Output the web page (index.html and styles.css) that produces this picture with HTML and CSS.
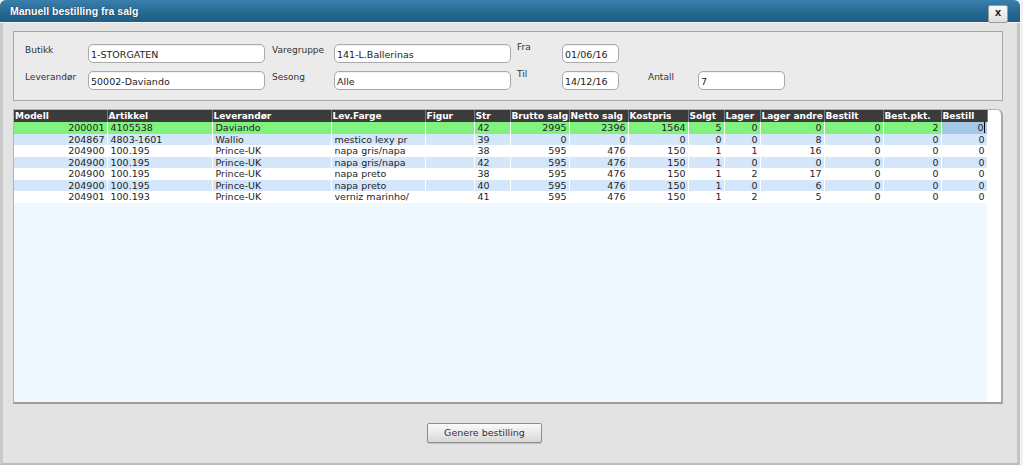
FILE: index.html
```html
<!DOCTYPE html>
<html>
<head>
<meta charset="utf-8">
<link rel="stylesheet" href="styles.css">
</head>
<body>
<div class="dialog">
  <div class="titlebar">
    <span class="title">Manuell bestilling fra salg</span>
    <span class="close">x</span>
  </div>
  <div class="content">
    <div class="panel">
      <label class="lbl">Butikk</label>
      <div class="inp">1-STORGATEN</div>
      <label class="lbl">Varegruppe</label>
      <div class="inp">141-L.Ballerinas</div>
      <label class="lbl up">Fra</label>
      <div class="inp">01/06/16</div>
      <span></span><span></span>

      <label class="lbl">Leverandør</label>
      <div class="inp">50002-Daviando</div>
      <label class="lbl">Sesong</label>
      <div class="inp">Alle</div>
      <label class="lbl up">Til</label>
      <div class="inp">14/12/16</div>
      <label class="lbl">Antall</label>
      <div class="inp">7</div>
    </div>

    <div class="gridbox">
      <div class="gridarea">
        <table class="grid">
          <colgroup>
            <col style="width:93px"><col style="width:105px"><col style="width:119px"><col style="width:94px"><col style="width:49px"><col style="width:36px"><col style="width:59px"><col style="width:59px"><col style="width:60px"><col style="width:36px"><col style="width:36px"><col style="width:64px"><col style="width:59px"><col style="width:58px"><col style="width:46px">
          </colgroup>
          <thead>
            <tr>
              <th>Modell</th><th>Artikkel</th><th>Leverandør</th><th>Lev.Farge</th><th>Figur</th><th>Str</th><th>Brutto salg</th><th>Netto salg</th><th>Kostpris</th><th>Solgt</th><th>Lager</th><th>Lager andre</th><th>Bestilt</th><th>Best.pkt.</th><th>Bestill</th>
            </tr>
          </thead>
          <tbody>
            <tr class="sel">
              <td class="r">200001</td><td>4105538</td><td>Daviando</td><td></td><td></td><td>42</td><td class="r">2995</td><td class="r">2396</td><td class="r">1564</td><td class="r">5</td><td class="r">0</td><td class="r">0</td><td class="r">0</td><td class="r">2</td><td class="r edit"><span class="caret">0</span></td>
            </tr>
            <tr class="alt">
              <td class="r">204867</td><td>4803-1601</td><td>Wallio</td><td>mestico lexy pr</td><td></td><td>39</td><td class="r">0</td><td class="r">0</td><td class="r">0</td><td class="r">0</td><td class="r">0</td><td class="r">8</td><td class="r">0</td><td class="r">0</td><td class="r">0</td>
            </tr>
            <tr>
              <td class="r">204900</td><td>100.195</td><td>Prince-UK</td><td>napa gris/napa</td><td></td><td>38</td><td class="r">595</td><td class="r">476</td><td class="r">150</td><td class="r">1</td><td class="r">1</td><td class="r">16</td><td class="r">0</td><td class="r">0</td><td class="r">0</td>
            </tr>
            <tr class="alt">
              <td class="r">204900</td><td>100.195</td><td>Prince-UK</td><td>napa gris/napa</td><td></td><td>42</td><td class="r">595</td><td class="r">476</td><td class="r">150</td><td class="r">1</td><td class="r">0</td><td class="r">0</td><td class="r">0</td><td class="r">0</td><td class="r">0</td>
            </tr>
            <tr>
              <td class="r">204900</td><td>100.195</td><td>Prince-UK</td><td>napa preto</td><td></td><td>38</td><td class="r">595</td><td class="r">476</td><td class="r">150</td><td class="r">1</td><td class="r">2</td><td class="r">17</td><td class="r">0</td><td class="r">0</td><td class="r">0</td>
            </tr>
            <tr class="alt">
              <td class="r">204900</td><td>100.195</td><td>Prince-UK</td><td>napa preto</td><td></td><td>40</td><td class="r">595</td><td class="r">476</td><td class="r">150</td><td class="r">1</td><td class="r">0</td><td class="r">6</td><td class="r">0</td><td class="r">0</td><td class="r">0</td>
            </tr>
            <tr>
              <td class="r">204901</td><td>100.193</td><td>Prince-UK</td><td>verniz marinho/</td><td></td><td>41</td><td class="r">595</td><td class="r">476</td><td class="r">150</td><td class="r">1</td><td class="r">2</td><td class="r">5</td><td class="r">0</td><td class="r">0</td><td class="r">0</td>
            </tr>
          </tbody>
        </table>
      </div>
    </div>

    <div class="footer">
      <button class="btn">Genere bestilling</button>
    </div>
  </div>
</div>
</body>
</html>
```

FILE: styles.css
```css
html, body {
  margin: 0;
  padding: 0;
  background: #f2f2f2;
}
body {
  width: 1023px;
  height: 465px;
  overflow: hidden;
  font-family: "DejaVu Sans", Verdana, sans-serif;
}
.dialog {
  width: 1020px;
  height: 465px;
  background: #e3e3e3;
  border-left: 3px solid #c9c9c9;
  border-right: 3px solid #c4c4c4;
  border-bottom: 2px solid #bdbdbd;
  border-radius: 6px 6px 0 0;
  display: flex;
  flex-direction: column;
  box-sizing: border-box;
}
.titlebar {
  height: 22px;
  margin: 0 -3px;
  background: linear-gradient(#3a80ad, #25678f 60%, #1f5e86);
  border-radius: 6px 6px 0 0;
  border-bottom: 1px solid #f4f4f4;
  display: flex;
  align-items: center;
  justify-content: space-between;
  padding: 0 10px 0 10px;
  flex-shrink: 0;
}
.title {
  color: #fff;
  font-family: "Liberation Sans", Arial, sans-serif;
  font-weight: bold;
  font-size: 10.5px;
  text-shadow: 0 0 1px #123;
  margin-top: -1px;
}
.close {
  width: 20px;
  height: 18px;
  box-sizing: border-box;
  margin-top: 5px;
  margin-right: 2px;
  background: linear-gradient(#fafafa, #dedede);
  border: 1px solid #9a9a9a;
  border-radius: 2px;
  display: flex;
  align-items: center;
  justify-content: center;
  font-family: "Liberation Sans", Arial, sans-serif;
  font-weight: bold;
  font-size: 11px;
  color: #111;
  line-height: 1;
  padding-bottom: 2px;
}
.content {
  padding: 8px 14px 0 10px;
  display: flex;
  flex-direction: column;
}
.panel {
  height: 70px;
  box-sizing: border-box;
  border: 1px solid #a6a6a6;
  background: #ebebeb;
  padding: 12px 0 0 11px;
  display: grid;
  grid-template-columns: 63px 177px 69px 177px 51px 57px 79px 87px;
  grid-template-rows: 19px 19px;
  row-gap: 8px;
}
.panel > :nth-child(8n+3) { margin-left: 7px; }
.panel > :nth-child(8n+5) { margin-left: 6px; }
.panel > :nth-child(8n+7) { margin-left: 29px; }
.lbl {
  font-size: 9px;
  color: #333;
  padding-top: 1px;
  white-space: nowrap;
}
.lbl.up {
  padding-top: 0;
  margin-top: -2px;
}
.inp {
  box-sizing: border-box;
  height: 19px;
  border: 1px solid #a9a9a9;
  border-radius: 5px;
  background: #fff;
  font-size: 9.5px;
  color: #222;
  padding: 4px 0 0 2px;
  white-space: nowrap;
  box-shadow: inset 0 1px 1px rgba(0,0,0,0.06);
}
.gridbox {
  margin-top: 8px;
  height: 295px;
  box-sizing: border-box;
  border: 1px solid #b3b3b3;
  border-bottom: 2px solid #9c9c9c;
  border-right: 2px solid #a9a9a9;
  border-radius: 0 6px 0 0;
  background: #fff;
  overflow: hidden;
}
.gridarea {
  width: 973px;
  height: 100%;
  background: #eff7ff;
}
.grid {
  border-collapse: collapse;
  table-layout: fixed;
  width: 973px;
  font-size: 9.5px;
  color: #1e1e1e;
}
.grid th {
  height: 12px;
  padding: 0 0 0 1px;
  background: #3b3b3b;
  color: #fff;
  font-weight: bold;
  font-size: 9px;
  text-align: left;
  border-right: 1px solid #7a7a7a;
  line-height: 12px;
  white-space: nowrap;
  overflow: hidden;
}
.grid td {
  height: 11.5px;
  padding: 0 2px 0 3px;
  line-height: 11px;
  border-right: 1px solid #fff;
  white-space: nowrap;
  overflow: hidden;
  background: #fff;
}
.grid tr.alt td { background: #d3e6fa; }
.grid tr.sel td { background: #80f27d; }
.grid tr.sel td.edit { background: #a3c9e6; }
.grid td.r { text-align: right; }
.caret {
  border-right: 1px solid #000;
}
.footer {
  padding-top: 17px;
}
.btn {
  margin-left: 414px;
  width: 115px;
  height: 20px;
  border: 1px solid #8f8f8f;
  border-radius: 2px;
  background: linear-gradient(#fbfbfb, #e9e9e9 50%, #d7d7d7);
  font-family: "DejaVu Sans", Verdana, sans-serif;
  font-size: 9.5px;
  color: #333;
  padding: 0;
  box-shadow: 0 1px 1px rgba(0,0,0,0.15);
}
```
